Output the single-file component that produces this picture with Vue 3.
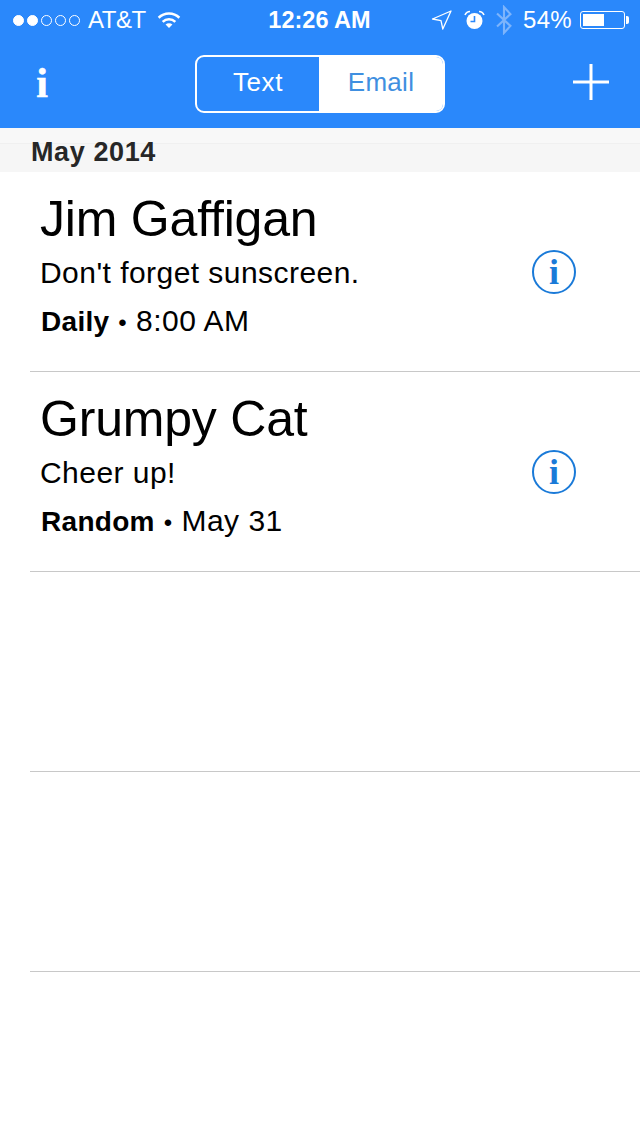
<script setup>
const signal = [true, true, false, false, false]

const reminders = [
  { name: 'Jim Gaffigan', message: "Don't forget sunscreen.", repeat: 'Daily', when: '8:00 AM' },
  { name: 'Grumpy Cat', message: 'Cheer up!', repeat: 'Random', when: 'May 31' },
]
</script>

<template>
  <div class="page">
    <header class="header">
      <div class="status">
        <div class="status-left">
          <div class="dots">
            <span v-for="(on, idx) in signal" :key="idx" :class="['dot', { on }]"></span>
          </div>
          <span class="carrier">AT&amp;T</span>
          <svg class="wifi" width="24" height="18" viewBox="0 0 26 20">
            <path d="M1.5 7.5 A16.5 16.5 0 0 1 24.5 7.5" fill="none" stroke="#fff" stroke-width="2.8" />
            <path d="M6 12 A10 10 0 0 1 20 12" fill="none" stroke="#fff" stroke-width="2.8" />
            <path d="M9.2 15 A5.5 5.5 0 0 1 16.8 15 L13 19 Z" fill="#fff" />
          </svg>
        </div>
        <div class="clock">12:26 AM</div>
        <div class="status-right">
          <svg class="arrow" width="21" height="20" viewBox="0 0 21 20">
            <path d="M20 1 L1.5 9 L10 10.6 L11.8 19 Z" fill="none" stroke="#fff" stroke-width="1.3" stroke-linejoin="round" />
          </svg>
          <svg class="alarm" width="21" height="20" viewBox="0 0 21 20">
            <circle cx="10.5" cy="11" r="8" fill="#fff" />
            <path d="M10.5 6 V11.5 H6.5" fill="none" stroke="#2a88fb" stroke-width="1.6" />
            <path d="M1 5 Q2.5 1.5 6 1.5 M15 1.5 Q18.5 1.5 20 5" fill="none" stroke="#fff" stroke-width="1.6" />
          </svg>
          <svg class="bt" width="18" height="30" viewBox="0 0 16 28">
            <path d="M1.5 8 L14 19.5 L8 26 V2 L14 8.5 L1.5 20" fill="none" stroke="#7db4fb" stroke-width="2" />
          </svg>
          <span class="percent">54%</span>
          <div class="battery">
            <div class="battery-body"><div class="battery-fill" :style="{ width: '54%' }"></div></div>
            <div class="battery-cap"></div>
          </div>
        </div>
      </div>
      <nav class="nav">
        <span class="nav-info">i</span>
        <div class="segment">
          <div class="seg seg-left">Text</div>
          <div class="seg seg-right">Email</div>
        </div>
        <svg class="plus" width="36" height="36" viewBox="0 0 36 36">
          <path d="M18 0 V36 M0 18 H36" stroke="#fff" stroke-width="3" />
        </svg>
      </nav>
    </header>

    <div class="section">May 2014</div>

    <ul class="list">
      <li v-for="r in reminders" :key="r.name" class="row">
        <div class="row-text">
          <div class="name">{{ r.name }}</div>
          <div class="message">{{ r.message }}</div>
          <div class="meta"><b>{{ r.repeat }}</b> <span class="bullet">•</span> {{ r.when }}</div>
        </div>
        <div class="info-btn">i</div>
      </li>
      <li class="row"></li>
      <li class="row"></li>
    </ul>
  </div>
</template>

<style>
html, body { background: #fff; }
</style>

<style scoped>
.page {
  width: 640px;
  height: 1136px;
  overflow: hidden;
  background: #fff;
  font-family: "Liberation Sans", Arial, sans-serif;
}
.header { height: 128px; background: #2a88fb; color: #fff; }
.status {
  height: 40px;
  display: grid;
  grid-template-columns: 1fr auto 1fr;
  align-items: center;
  padding: 0 11px 0 13px;
}
.status-left { display: flex; align-items: center; }
.dots { display: flex; gap: 3px; }
.dot {
  width: 11px;
  height: 11px;
  box-sizing: border-box;
  border: 1px solid #fff;
  border-radius: 50%;
}
.dot.on { background: #fff; }
.carrier { font-size: 24px; margin-left: 8px; letter-spacing: -0.5px; }
.wifi { margin-left: 11px; }
.clock { font-size: 23.5px; font-weight: 700; margin-left: -3px; }
.status-right { display: flex; align-items: center; justify-content: flex-end; }
.alarm { margin-left: 12px; }
.bt { margin-left: 10px; }
.percent { font-size: 24px; margin-left: 10px; letter-spacing: 0.3px; }
.battery { display: flex; align-items: center; margin-left: 8px; }
.battery-body {
  width: 45px;
  height: 18px;
  box-sizing: border-box;
  border: 1px solid #fff;
  border-radius: 3px;
  padding: 2px;
}
.battery-fill { height: 100%; background: #fff; }
.battery-cap { width: 3px; height: 8px; background: #fff; margin-left: 1px; border-radius: 0 2px 2px 0; }

.nav {
  height: 88px;
  display: flex;
  align-items: center;
  justify-content: space-between;
  padding: 0 31px 0 35px;
  box-sizing: border-box;
}
.nav-info {
  width: 14px;
  margin-bottom: 2px;
  font-family: "Liberation Serif", serif;
  font-weight: 700;
  font-size: 42px;
  line-height: 1;
  text-align: center;
  -webkit-text-stroke: 0.5px #fff;
}
.segment {
  display: flex;
  width: 250px;
  height: 58px;
  margin-left: 18px;
  box-sizing: border-box;
  border: 2px solid #fff;
  border-radius: 9px;
  overflow: hidden;
  font-size: 26px;
  letter-spacing: 0.6px;
}
.seg { display: flex; align-items: center; justify-content: center; padding-bottom: 3px; box-sizing: border-box; }
.seg-left { flex: 0 0 122px; }
.seg-right { flex: 1; background: #fff; color: #3f8fe0; letter-spacing: 0.3px; }
.plus { margin-bottom: 4px; }

.section {
  height: 44px;
  box-sizing: border-box;
  padding: 7px 0 0 31px;
  background: linear-gradient(#f8f8f8 15px, #f0f0f0 15px, #f0f0f0 16px, #f6f6f6 16px);
  color: #272727;
  font-size: 27px;
  font-weight: 700;
  line-height: 34px;
  letter-spacing: 0.6px;
}
.list { list-style: none; margin: 0; padding: 0; }
.row {
  height: 200px;
  box-sizing: border-box;
  margin-left: 30px;
  padding: 17px 64px 0 10px;
  border-bottom: 1px solid #c8c8c8;
  display: flex;
  justify-content: space-between;
  color: #000;
}
.name { font-size: 50px; line-height: 60px; letter-spacing: -0.2px; }
.message { font-size: 30px; line-height: 36px; margin-top: 6px; letter-spacing: 0.45px; }
.meta { font-size: 30px; line-height: 36px; margin-top: 12px; letter-spacing: 0.5px; }
.meta b { font-size: 28px; font-weight: 700; letter-spacing: 0.3px; margin-left: 1px; }
.bullet { font-size: 24px; }
.info-btn {
  width: 44px;
  height: 44px;
  margin-top: 61px;
  box-sizing: border-box;
  border: 2px solid #1a7ad8;
  border-radius: 50%;
  color: #1a7ad8;
  font-family: "Liberation Serif", serif;
  font-size: 36px;
  font-weight: 700;
  line-height: 40px;
  text-align: center;
}
</style>
